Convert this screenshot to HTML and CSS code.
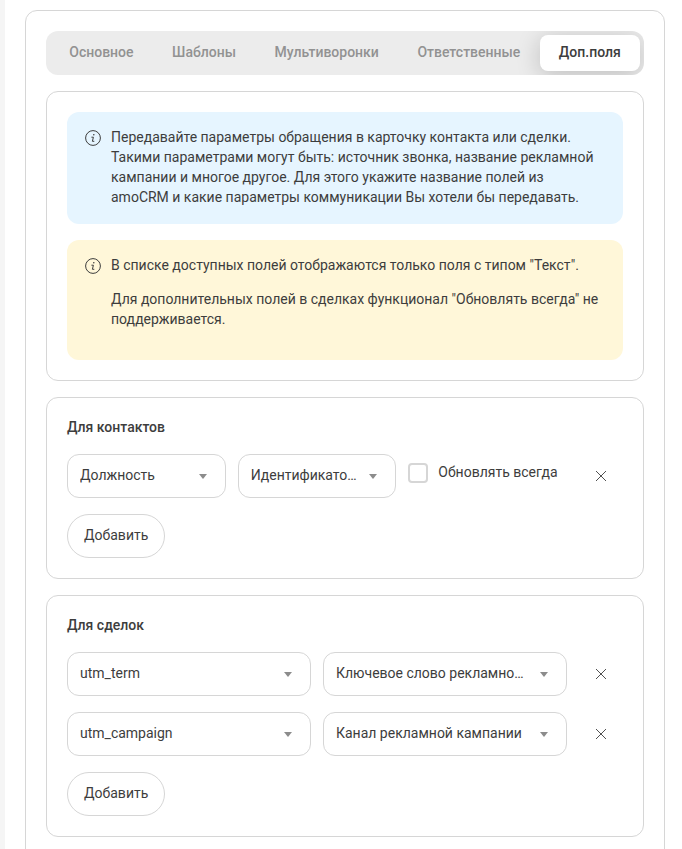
FILE: index.html
```html
<!DOCTYPE html>
<html lang="ru">
<head>
  <meta charset="utf-8">
  <meta name="viewport" content="width=device-width, initial-scale=1">
  <title>Доп.поля</title>
  <link rel="stylesheet" href="styles.css">
</head>
<body>
  <svg class="sprite" aria-hidden="true">
    <symbol id="icon-info" viewBox="0 0 16 16">
      <circle cx="8" cy="8" r="7.4" fill="none" stroke="currentColor" stroke-width="1"/>
      <circle cx="8.8" cy="4.8" r="0.8" fill="currentColor"/>
      <path d="M6.8 7.2h1.6L7.4 11.3h1.5" fill="none" stroke="currentColor" stroke-width="1" stroke-linecap="round" stroke-linejoin="round"/>
    </symbol>
    <symbol id="icon-close" viewBox="0 0 12 12">
      <path d="M1 1l10 10M11 1L1 11" fill="none" stroke="currentColor" stroke-width="0.9"/>
    </symbol>
    <symbol id="icon-arrow" viewBox="0 0 8 5">
      <path d="M0 0h8L4 5z" fill="currentColor"/>
    </symbol>
  </svg>

  <main class="panel">
    <nav class="tabs">
      <button class="tab" type="button">Основное</button>
      <button class="tab" type="button">Шаблоны</button>
      <button class="tab" type="button">Мультиворонки</button>
      <button class="tab" type="button">Ответственные</button>
      <button class="tab tab-active" type="button">Доп.поля</button>
    </nav>

    <section class="card">
      <div class="alert alert-info">
        <svg class="alert-icon" aria-hidden="true"><use href="#icon-info"/></svg>
        <div>Передавайте параметры обращения в карточку контакта или сделки. Такими параметрами могут быть: источник звонка, название рекламной кампании и многое другое. Для этого укажите название полей из amoCRM и какие параметры коммуникации Вы хотели бы передавать.</div>
      </div>
      <div class="alert alert-warning">
        <svg class="alert-icon" aria-hidden="true"><use href="#icon-info"/></svg>
        <div>
          <p>В списке доступных полей отображаются только поля с типом "Текст".</p>
          <p>Для дополнительных полей в сделках функционал "Обновлять всегда" не поддерживается.</p>
        </div>
      </div>
    </section>

    <section class="card">
      <h2>Для контактов</h2>
      <div class="row">
        <div class="fields">
          <div class="select">
            <select aria-label="Поле контакта"><option>Должность</option></select>
            <svg class="arrow" aria-hidden="true"><use href="#icon-arrow"/></svg>
          </div>
          <div class="select">
            <select aria-label="Параметр контакта"><option>Идентификатор посетителя</option></select>
            <svg class="arrow" aria-hidden="true"><use href="#icon-arrow"/></svg>
          </div>
          <label class="check"><input type="checkbox">Обновлять всегда</label>
        </div>
        <button class="remove" type="button" aria-label="Удалить"><svg aria-hidden="true"><use href="#icon-close"/></svg></button>
      </div>
      <button class="add" type="button">Добавить</button>
    </section>

    <section class="card">
      <h2>Для сделок</h2>
      <div class="row">
        <div class="fields">
          <div class="select">
            <select aria-label="Поле сделки"><option>utm_term</option></select>
            <svg class="arrow" aria-hidden="true"><use href="#icon-arrow"/></svg>
          </div>
          <div class="select">
            <select aria-label="Параметр сделки"><option>Ключевое слово рекламной кампании</option></select>
            <svg class="arrow" aria-hidden="true"><use href="#icon-arrow"/></svg>
          </div>
        </div>
        <button class="remove" type="button" aria-label="Удалить"><svg aria-hidden="true"><use href="#icon-close"/></svg></button>
      </div>
      <div class="row">
        <div class="fields">
          <div class="select">
            <select aria-label="Поле сделки"><option>utm_campaign</option></select>
            <svg class="arrow" aria-hidden="true"><use href="#icon-arrow"/></svg>
          </div>
          <div class="select">
            <select aria-label="Параметр сделки"><option>Канал рекламной кампании</option></select>
            <svg class="arrow" aria-hidden="true"><use href="#icon-arrow"/></svg>
          </div>
        </div>
        <button class="remove" type="button" aria-label="Удалить"><svg aria-hidden="true"><use href="#icon-close"/></svg></button>
      </div>
      <button class="add" type="button">Добавить</button>
    </section>
  </main>
</body>
</html>
```
FILE: styles.css
```css
* {
  box-sizing: border-box;
}

body {
  margin: 0;
  padding: 10px 17px 0 20px;
  border-left: 5px solid #f5f5f5;
  background: #fff;
  color: #3d3d3d;
  font: 14px/20px Roboto, sans-serif;
}

button,
select {
  color: inherit;
  font: inherit;
}

h2,
p {
  margin: 0;
}

.sprite {
  display: none;
}

.panel {
  display: flex;
  flex-direction: column;
  gap: 16px;
  padding: 20px 20px 24px;
  border: 1px solid #d6d6d6;
  border-radius: 12px;
}

.tabs {
  display: flex;
  padding: 4px;
  border-radius: 12px;
  background: #ececec;
  overflow: hidden;
}

.tab {
  flex: 1 1 auto;
  height: 36px;
  padding: 0 16px 2px;
  border: 0;
  border-radius: 8px;
  background: none;
  color: #929292;
  font-weight: 500;
}

.tab-active {
  background: #fff;
  box-shadow: 0 4px 24px rgba(0, 0, 0, 0.2);
  color: #3d3d3d;
}

.card {
  display: flex;
  flex-direction: column;
  gap: 16px;
  padding: 20px;
  border: 1px solid #d6d6d6;
  border-radius: 12px;
}

.card h2 {
  padding-bottom: 2px;
  font-size: 14px;
  font-weight: 500;
  line-height: 18px;
}

.alert {
  display: flex;
  gap: 10px;
  padding: 15px 24px 17px 18px;
  border-radius: 12px;
}

.alert p {
  margin-bottom: 14px;
}

.alert-info {
  background: #e6f5ff;
}

.alert-warning {
  background: #fff7d9;
}

.alert-icon {
  flex: none;
  width: 16px;
  height: 16px;
  margin-top: 3px;
}

.row {
  display: flex;
  gap: 12px;
}

.fields {
  flex: 1;
  display: grid;
  grid-auto-flow: column;
  grid-auto-columns: minmax(0, 1fr);
  gap: 12px;
}

.select {
  display: grid;
  align-items: center;
}

.select select {
  grid-area: 1 / 1;
  width: 100%;
  height: 44px;
  padding: 0 38px 2px 12px;
  border: 1px solid #d6d6d6;
  border-radius: 12px;
  background: #fff;
  appearance: none;
  text-overflow: ellipsis;
}

.arrow {
  grid-area: 1 / 1;
  justify-self: end;
  width: 8px;
  height: 5px;
  margin-right: 19px;
  color: #8c8c8c;
  pointer-events: none;
}

.check {
  display: flex;
  gap: 10px;
  align-self: start;
  padding-top: 9px;
  line-height: 18px;
  white-space: nowrap;
}

.check input {
  flex: none;
  width: 20px;
  height: 20px;
  margin: 0;
  border: 2px solid #d6d6d6;
  border-radius: 4px;
  background: #fff;
  appearance: none;
}

.remove {
  display: grid;
  place-items: center;
  width: 44px;
  height: 44px;
  padding: 0;
  border: 0;
  background: none;
}

.remove svg {
  width: 12px;
  height: 12px;
}

.add {
  align-self: flex-start;
  height: 44px;
  padding: 0 16px 2px;
  border: 1px solid #d6d6d6;
  border-radius: 22px;
  background: #fff;
}
```
